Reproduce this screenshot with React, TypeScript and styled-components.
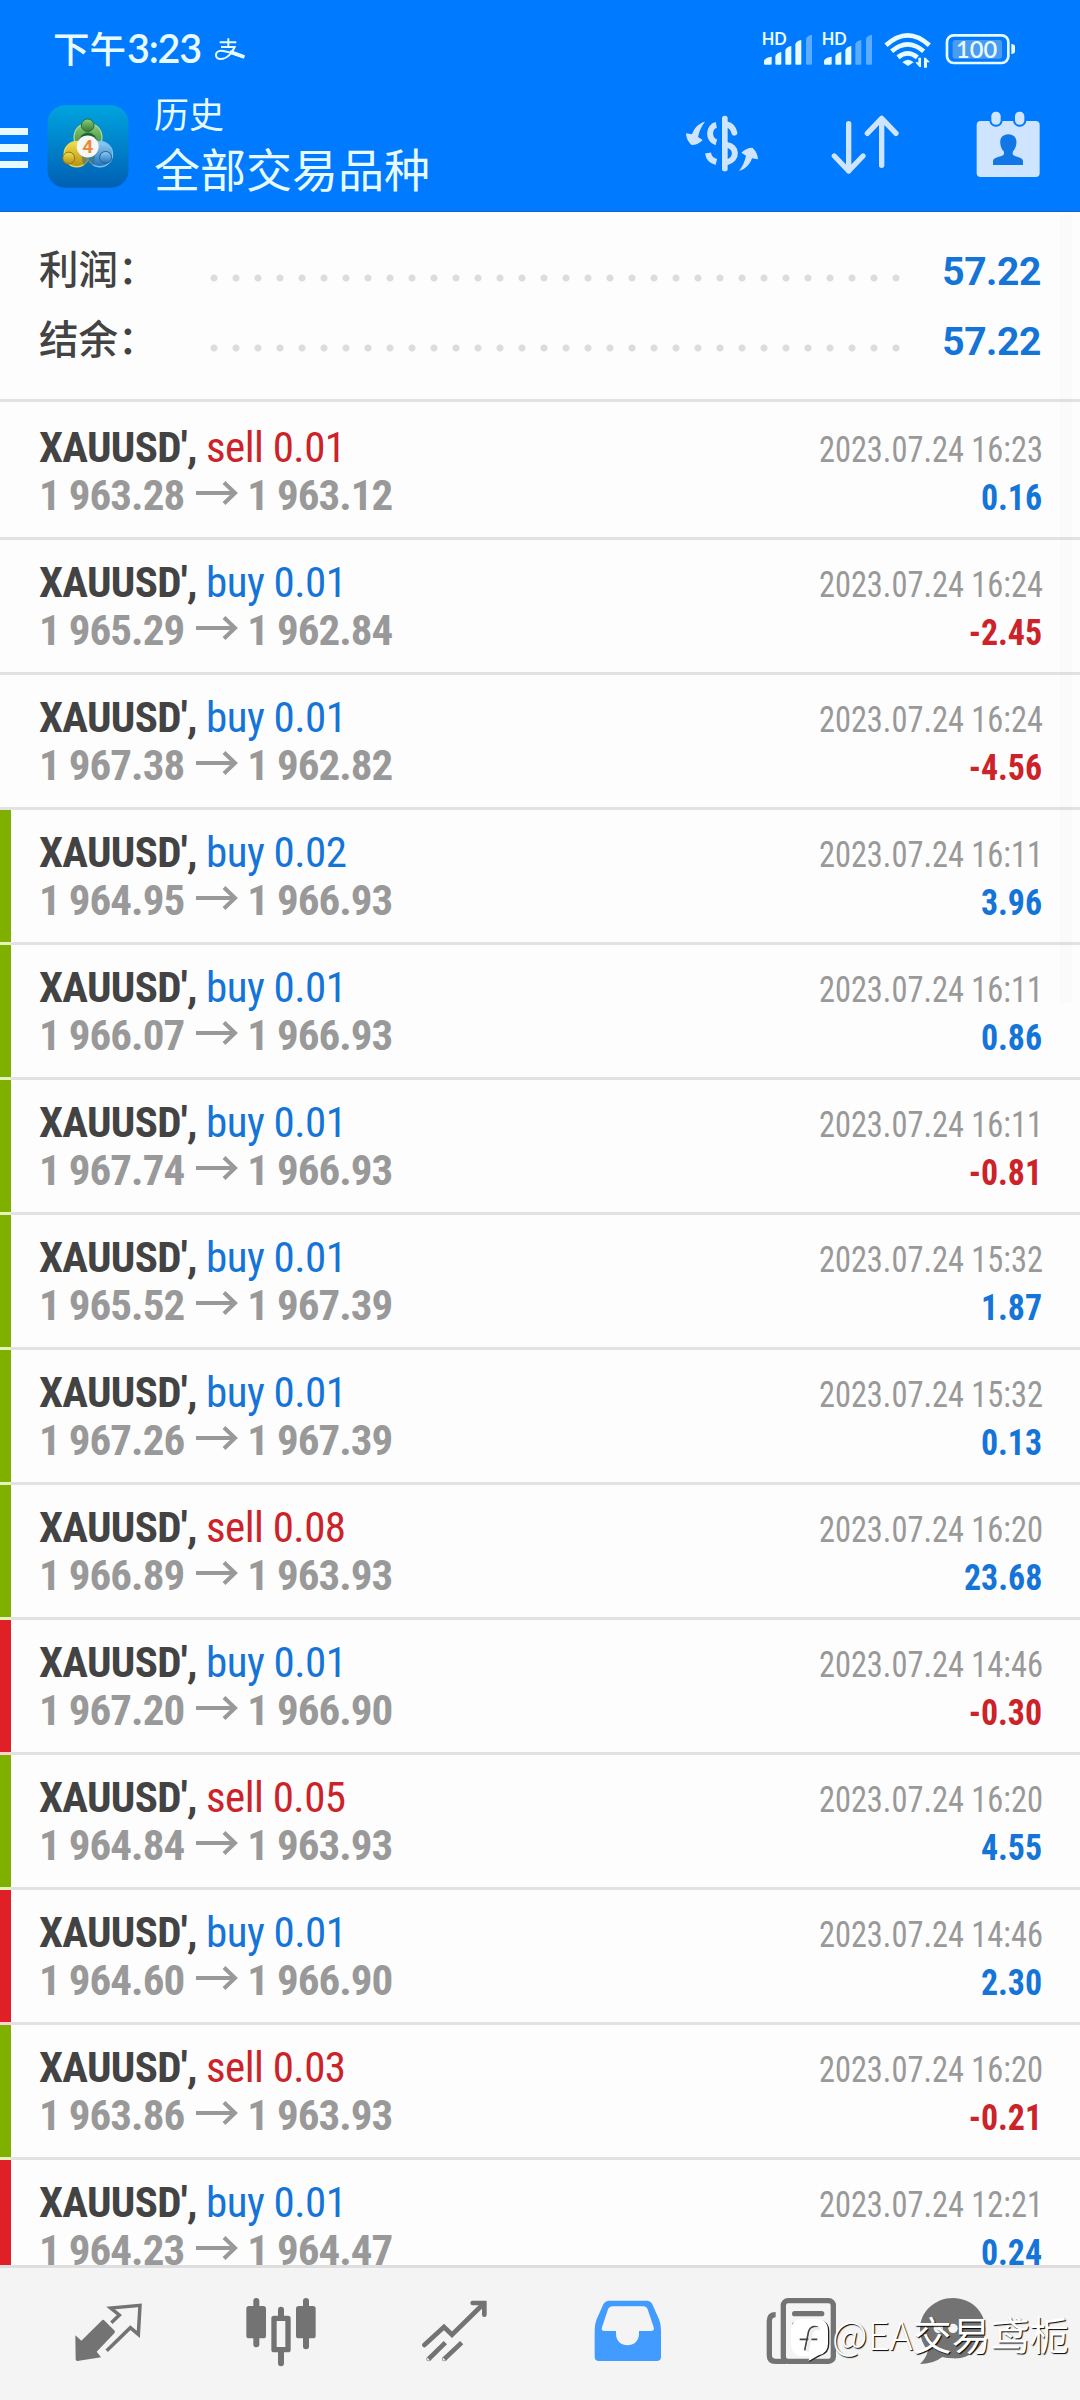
import React from "react";
import styled, { createGlobalStyle } from "styled-components";

const condensed = `"Roboto Condensed", Roboto, sans-serif`;
const cjk = `"Noto Sans CJK SC", sans-serif`;

const colors = {
  brand: "#007aff",
  onBrand: "#e6faff",
  action: "#cfe5ff",
  buy: "#1474d8",
  sell: "#cc2229",
  ink: "#434343",
  muted: "#999999",
  line: "#e2e2e2",
  surface: "#fdfdfd",
  nav: "#f4f4f4",
  navIcon: "#737373",
  navActive: "#429bfe",
};

const GlobalStyle = createGlobalStyle`
  * { box-sizing: border-box; }
  body { margin: 0; background: ${colors.surface}; }
`;

const Screen = styled.div`
  position: relative;
  display: flex;
  flex-direction: column;
  width: 1080px;
  height: 2400px;
  overflow: hidden;
  background: ${colors.surface};
`;

const Header = styled.header`
  display: flex;
  flex-direction: column;
  flex: none;
  height: 212px;
  background: ${colors.brand};
  border-bottom: 1px solid #1763b8;
  color: ${colors.onBrand};
`;

const StatusBar = styled.div`
  display: flex;
  align-items: center;
  height: 90px;
  padding: 8px 62px 0 53px;
`;

const Clock = styled.div`
  display: flex;
  align-items: center;
  font: 500 36.5px/48px ${cjk};
  margin-top: -3px;
`;

const Digits = styled.span`
  font-family: Lato, ${cjk};
  font-size: 39.5px;
  font-weight: 600;
  margin-left: 1px;
  letter-spacing: -1.2px;
`;

const PayIcon = styled.svg`
  width: 34px;
  height: 27px;
  margin: -2px 0 0 12px;
`;

const StatusIcons = styled.svg`
  width: 258px;
  height: 40px;
  margin-left: auto;
`;

const AppBar = styled.div`
  display: flex;
  align-items: center;
  height: 112px;
`;

const MenuButton = styled.div`
  display: flex;
  flex-direction: column;
  gap: 9px;
  width: 28px;
  margin-top: 4px;
`;

const MenuLine = styled.span`
  height: 7.5px;
  background: ${colors.onBrand};
`;

const Logo = styled.svg`
  width: 82px;
  height: 83px;
  margin-left: 19px;
`;

const Titles = styled.div`
  display: flex;
  flex-direction: column;
  margin-left: 25px;
  font-family: ${cjk};
  font-weight: 400;
`;

const Subtitle = styled.span`
  height: 50px;
  font-size: 35px;
  line-height: 43px;
`;

const Title = styled.span`
  height: 61px;
  font-size: 46px;
  line-height: 53px;
`;

const Actions = styled.div`
  display: flex;
  align-items: center;
  margin: -2px 0 0 auto;
  padding-right: 36px;
`;

const ActionIcon = styled.svg<{ $width: number; $gap?: number }>`
  width: ${(p) => p.$width}px;
  height: 72px;
  margin-right: ${(p) => p.$gap ?? 0}px;
`;

const Summary = styled.section`
  flex: none;
  height: 190px;
  padding: 24px 39px 0 39px;
  border-bottom: 3px solid ${colors.line};
`;

const SummaryRow = styled.div`
  display: flex;
  align-items: center;
  height: 70px;
`;

const SummaryLabel = styled.span`
  width: 171px;
  margin-top: -8px;
  font: 500 39.5px/60px ${cjk};
  color: ${colors.ink};
`;

const Dots = styled.span`
  width: 704px;
  height: 8px;
  margin-top: 14px;
  background: radial-gradient(circle at 4px 4px, #dcdcdc 3px, transparent 4px) 0 0 / 22px 8px repeat-x;
`;

const SummaryValue = styled.span`
  margin-left: auto;
  margin-top: 1px;
  font: 700 39px/60px Roboto, sans-serif;
  letter-spacing: -0.4px;
  color: ${colors.buy};
`;

const List = styled.main`
  flex: 1;
  min-height: 0;
  padding-top: 3px;
  overflow: hidden;
`;

type Mark = "none" | "green" | "red";
const marks: Record<Mark, [string, string]> = {
  none: ["transparent", colors.line],
  green: ["#7fb000", "#e4f3bd"],
  red: ["#e02027", "#fbd3d0"],
};

const Row = styled.article`
  display: flex;
  height: 135px;
`;

const Marker = styled.span<{ $mark: Mark }>`
  width: 11px;
  background: ${(p) => marks[p.$mark][0]};
  background-clip: padding-box;
  border-bottom: 3px solid ${(p) => marks[p.$mark][1]};
`;

const RowBody = styled.div`
  flex: 1;
  padding: 18px 37px 0 28px;
  border-bottom: 3px solid ${colors.line};
`;

const Line = styled.div`
  display: flex;
  align-items: baseline;
  justify-content: space-between;
  height: 48px;
  font: 400 43px/48px ${condensed};
  white-space: pre;
`;

const Symbol = styled.b`
  color: ${colors.ink};
  font-weight: 700;
  letter-spacing: -0.7px;
`;

const Side = styled.span<{ $side: string }>`
  color: ${(p) => (p.$side === "buy" ? colors.buy : colors.sell)};
  letter-spacing: -0.55px;
`;

const Prices = styled.span`
  color: ${colors.muted};
  font-weight: 700;
  letter-spacing: -0.95px;
`;

const ArrowIcon = styled.svg`
  width: 42px;
  height: 24px;
  margin: 0 9px 0 12px;
  vertical-align: 5px;
`;

const Time = styled.time`
  color: ${colors.muted};
  font-size: 36px;
  transform: scaleX(0.9);
  transform-origin: right;
`;

const Profit = styled.b<{ $loss: boolean }>`
  margin-right: 1px;
  font-size: 36px;
  font-weight: 700;
  color: ${(p) => (p.$loss ? colors.sell : colors.buy)};
  transform: scaleX(0.94);
  transform-origin: right;
`;

const ScrollTrack = styled.div`
  position: absolute;
  top: 215px;
  right: 8px;
  width: 12px;
  height: 788px;
  background: rgba(0, 0, 0, 0.012);
`;

const Nav = styled.nav`
  display: flex;
  flex: none;
  height: 135px;
  padding-left: 21.5px;
  background: ${colors.nav};
  border-top: 3px solid #dedede;
`;

const NavItem = styled.div<{ $width?: number; $active?: boolean }>`
  display: flex;
  align-items: center;
  justify-content: center;
  width: ${(p) => p.$width ?? 173}px;
  color: ${(p) => (p.$active ? colors.navActive : colors.navIcon)};
  svg {
    width: 72px;
    height: 72px;
  }
`;

const Watermark = styled.div`
  position: absolute;
  left: 790px;
  top: 2306px;
  display: flex;
  align-items: center;
  height: 54px;
  color: #fff;
  font: 400 39px/54px ${cjk};
  text-shadow: 1px 1px 1px #000;
  white-space: nowrap;
  svg {
    width: 40px;
    height: 46px;
    margin: 14px 2px 0 0;
  }
`;

const Thin = styled.span`
  font-weight: 300;
`;

type Deal = [string, string, string, string, string, string, Mark];
const deals: Deal[] = [
  ["sell", "0.01", "1 963.28", "1 963.12", "16:23", "0.16", "none"],
  ["buy", "0.01", "1 965.29", "1 962.84", "16:24", "-2.45", "none"],
  ["buy", "0.01", "1 967.38", "1 962.82", "16:24", "-4.56", "none"],
  ["buy", "0.02", "1 964.95", "1 966.93", "16:11", "3.96", "green"],
  ["buy", "0.01", "1 966.07", "1 966.93", "16:11", "0.86", "green"],
  ["buy", "0.01", "1 967.74", "1 966.93", "16:11", "-0.81", "green"],
  ["buy", "0.01", "1 965.52", "1 967.39", "15:32", "1.87", "green"],
  ["buy", "0.01", "1 967.26", "1 967.39", "15:32", "0.13", "green"],
  ["sell", "0.08", "1 966.89", "1 963.93", "16:20", "23.68", "green"],
  ["buy", "0.01", "1 967.20", "1 966.90", "14:46", "-0.30", "red"],
  ["sell", "0.05", "1 964.84", "1 963.93", "16:20", "4.55", "green"],
  ["buy", "0.01", "1 964.60", "1 966.90", "14:46", "2.30", "red"],
  ["sell", "0.03", "1 963.86", "1 963.93", "16:20", "-0.21", "green"],
  ["buy", "0.01", "1 964.23", "1 964.47", "12:21", "0.24", "red"],
];

function DealRow({ deal }: { deal: Deal }) {
  const [side, lots, open, close, time, profit, mark] = deal;
  return (
    <Row>
      <Marker $mark={mark} />
      <RowBody>
        <Line>
          <span>
            <Symbol>XAUUSD', </Symbol>
            <Side $side={side}>{`${side} ${lots}`}</Side>
          </span>
          <Time>{`2023.07.24 ${time}`}</Time>
        </Line>
        <Line>
          <Prices>
            {open}
            <ArrowIcon viewBox="0 0 42 24" fill="none" stroke="currentColor" strokeWidth="4">
              <path d="M0 12H39M28 1.500L39 12L28 22.500" />
            </ArrowIcon>
            {close}
          </Prices>
          <Profit $loss={profit.startsWith("-")}>{profit}</Profit>
        </Line>
      </RowBody>
    </Row>
  );
}

function Signal({ x, level }: { x: number; level: number }) {
  const tops = [110, 96, 78, 60, 44];
  return (
    <g fill={colors.onBrand}>
      <text x={x - 7} y="75" fontFamily="Lato, sans-serif" fontWeight="700" fontSize="49">HD</text>
      {tops.map((top, i) => {
        const left = x + [0, 34, 64, 94, 126][i];
        const w = i === 0 ? 23 : 18;
        return (
          <path
            key={top}
            opacity={i < level ? 1 : 0.4}
            d={`M${left} 131V${top + 12}Q${left + 5} ${top + 2} ${left + w} ${top}V131Q${left + w} 134 ${left + w - 3} 134H${left + 3}Q${left} 134 ${left} 131Z`}
          />
        );
      })}
    </g>
  );
}

export default function App() {
  return (
    <Screen>
      <GlobalStyle />
      <Header>
        <StatusBar>
          <Clock>
            下午<Digits>3:23</Digits>
          </Clock>
          <PayIcon viewBox="549 44 102 81" fill="none" stroke={colors.onBrand} strokeWidth="6">
            <path d="M569 66H619M595 54V79M573 80H614C607 97 592 116 572 116C552 116 554 91 573 91C594 91 612 104 643 110" />
            <path d="M600 94L643 110" strokeWidth="11" />
          </PayIcon>
          <StatusIcons viewBox="270 27 774 120">
            <Signal x={282} level={4} />
            <Signal x={462} level={3} />
            <g fill="none" stroke={colors.onBrand} strokeWidth="14">
              <path d="M648 76Q713 16 778 76" />
              <path d="M665 94Q713 52 761 94" />
              <path d="M684 112Q713 88 742 112" />
            </g>
            <path d="M697 127Q714 112 731 127L714 138Z" fill={colors.onBrand} />
            <path d="M753 113V141H748L736 127H745V113ZM762 143V113H767L780 127H771V143Z" fill={colors.onBrand} />
            <rect x="831" y="46" width="184" height="83" rx="20" fill="none" stroke={colors.onBrand} strokeWidth="8" />
            <rect x="848" y="60" width="148" height="56" rx="7" fill="#4b9cf0" />
            <path d="M1024 72Q1035 72 1035 80V94Q1035 102 1024 102Z" fill={colors.onBrand} />
            <text x="920" y="114" textAnchor="middle" fontFamily="Lato, sans-serif" fontWeight="600" fontSize="71" fill={colors.onBrand}>100</text>
          </StatusIcons>
        </StatusBar>
        <AppBar>
          <MenuButton>
            <MenuLine />
            <MenuLine />
            <MenuLine />
          </MenuButton>
          <Logo viewBox="52 252 246 250">
            <defs>
              <linearGradient id="tile" x1="0" y1="0" x2="0" y2="1">
                <stop offset="0" stopColor="#00a4df" />
                <stop offset="1" stopColor="#005fb4" />
              </linearGradient>
              <linearGradient id="green" x1="0" y1="0" x2="0" y2="1">
                <stop offset="0" stopColor="#8fcf7b" />
                <stop offset="1" stopColor="#2f7a35" />
              </linearGradient>
              <linearGradient id="gold" x1="0" y1="0" x2="0" y2="1">
                <stop offset="0" stopColor="#f0e04a" />
                <stop offset="1" stopColor="#b98f14" />
              </linearGradient>
              <linearGradient id="sky" x1="0" y1="0" x2="0" y2="1">
                <stop offset="0" stopColor="#8fcdf5" />
                <stop offset="1" stopColor="#2272b8" />
              </linearGradient>
            </defs>
            <rect x="53" y="253" width="244" height="248" rx="52" fill="url(#tile)" />
            <circle cx="175" cy="349" r="42" fill="url(#green)" stroke="#a5d98c" strokeWidth="4" />
            <circle cx="175" cy="362" r="27" fill="#1f6433" />
            <circle cx="141" cy="400" r="38" fill="url(#gold)" stroke="#e6d95e" strokeWidth="4" />
            <circle cx="211" cy="400" r="38" fill="url(#sky)" stroke="#7fc0ec" strokeWidth="4" />
            <path d="M150 366L160 432L194 432L200 366Z" fill="#2b6f78" opacity=".55" />
            <circle cx="174" cy="313" r="19" fill="url(#green)" stroke="#2f6a35" strokeWidth="3" />
            <circle cx="117" cy="412" r="18" fill="url(#gold)" stroke="#947414" strokeWidth="3" />
            <circle cx="228" cy="410" r="18" fill="url(#sky)" stroke="#1f5f9a" strokeWidth="3" />
            <circle cx="174" cy="377" r="33" fill="#f6f7f4" />
            <text x="174" y="398" textAnchor="middle" fontFamily="Roboto, sans-serif" fontWeight="700" fontSize="58" fill="#e88b3c">4</text>
          </Logo>
          <Titles>
            <Subtitle>历史</Subtitle>
            <Title>全部交易品种</Title>
          </Titles>
          <Actions>
            <ActionIcon $width={84} $gap={65} viewBox="30 270 252 216" fill={colors.action}>
              <rect x="156" y="290" width="17" height="167" rx="8" />
              <g fill="none" stroke={colors.action} strokeWidth="18">
                <path d="M139 318C116 322 112 362 139 370" />
                <path d="M114 402C116 416 124 425 139 429" />
                <path d="M172 317C184 320 190 328 193 341" strokeLinecap="round" />
                <path d="M170 378C202 382 204 422 170 430" />
              </g>
              <path d="M105 308C84 314 72 328 66 346L48 343C49 360 56 370 65 378C78 378 90 372 98 363L84 354C88 336 94 322 105 308Z" />
              <path d="M207 456C228 450 240 436 246 418L264 421C263 404 256 394 247 386C234 386 222 392 214 401L228 410C224 428 218 442 207 456Z" />
            </ActionIcon>
            <ActionIcon $width={72} $gap={71} viewBox="477 270 216 216" fill="none" stroke={colors.action} strokeWidth="16" strokeLinecap="round" strokeLinejoin="round">
              <path d="M536 314V456M493 411L536 456L579 411" />
              <path d="M635 439V298M592 343L635 298L678 343" />
            </ActionIcon>
            <ActionIcon $width={72} viewBox="906 270 216 216" fill={colors.action}>
              <rect x="920" y="306" width="189" height="168" rx="12" />
              <rect x="958" y="274" width="40" height="49" rx="19" fill={colors.brand} />
              <rect x="1029" y="274" width="40" height="49" rx="19" fill={colors.brand} />
              <rect x="964" y="278" width="28" height="39" rx="13" />
              <rect x="1035" y="278" width="28" height="39" rx="13" />
              <path d="M1015 346C1034 346 1041 360 1039 374C1038 386 1032 394 1028 398V406C1034 416 1058 412 1059 426V438H969V426C970 412 996 416 1002 406V398C998 394 992 386 991 374C989 360 996 346 1015 346Z" fill="#1176e6" />
            </ActionIcon>
          </Actions>
        </AppBar>
      </Header>

      <Summary>
        <SummaryRow>
          <SummaryLabel>利润：</SummaryLabel>
          <Dots />
          <SummaryValue>57.22</SummaryValue>
        </SummaryRow>
        <SummaryRow>
          <SummaryLabel>结余：</SummaryLabel>
          <Dots />
          <SummaryValue>57.22</SummaryValue>
        </SummaryRow>
      </Summary>

      <List>
        {deals.map((deal, i) => (
          <DealRow key={i} deal={deal} />
        ))}
      </List>
      <ScrollTrack />

      <Nav>
        <NavItem>
          <svg viewBox="36 54 216 216" fill="currentColor">
            <path d="M127 120Q130 118 134 122L164 152Q166 156 163 160L110 215L123 232L52 243Q47 243 47 238L46 166L64 182Z" />
            <path d="M154 128L178 105L152 84L240 76L235 163L211 143L140 212" fill="none" stroke="currentColor" strokeWidth="10.500" />
          </svg>
        </NavItem>
        <NavItem>
          <svg viewBox="555 54 216 216" fill="currentColor">
            <rect x="559" y="78" width="59" height="97" rx="8" />
            <rect x="580" y="54" width="18" height="148" rx="9" />
            <rect x="708" y="78" width="59" height="97" rx="8" />
            <rect x="729" y="54" width="18" height="154" rx="9" />
            <rect x="642" y="115" width="42" height="94" fill="none" stroke="currentColor" strokeWidth="16" strokeLinejoin="round" />
            <path d="M654 110V89Q654 80 663 80Q672 80 672 89V110ZM654 214V250Q654 259 663 259Q672 259 672 250V214Z" />
          </svg>
        </NavItem>
        <NavItem>
          <svg viewBox="1074 54 216 216" fill="none" stroke="currentColor" strokeWidth="14">
            <path d="M1093 195L1152 141L1176 164L1270 72" strokeLinecap="round" />
            <path d="M1238 69H1273V104" strokeLinecap="round" />
            <path d="M1106 237L1156 188M1153 237L1205 188" />
            <circle cx="1106" cy="237" r="1" strokeWidth="12" />
            <circle cx="1153" cy="237" r="1" strokeWidth="12" />
          </svg>
        </NavItem>
        <NavItem $active>
          <svg viewBox="33 54 216 216" fill="currentColor">
            <path fillRule="evenodd" d="M88 62H200Q212 62 217 73L237 118Q243 132 243 150V230Q243 243 230 243H57Q44 243 44 230V150Q44 132 50 118L70 73Q76 62 88 62ZM98 79Q88 79 84 88L66 142Q62 153 74 153H108V161C108 207 177 207 177 161V153H212Q225 153 221 142L203 88Q199 79 190 79Z" />
          </svg>
        </NavItem>
        <NavItem>
          <svg viewBox="552 54 216 216" fill="none" stroke="currentColor" strokeWidth="16">
            <rect x="610" y="62" width="150" height="182" rx="14" />
            <path d="M587 104Q568 104 568 124V226Q568 244 586 244H620" />
            <path d="M644 101H725" strokeLinecap="round" />
            <path d="M644 134H725" strokeLinecap="round" />
          </svg>
        </NavItem>
        <NavItem $width={132}>
          <svg viewBox="1011 54 216 216" fill="currentColor">
            <path d="M1119 54C1174 54 1216 96 1216 146C1216 200 1170 238 1119 235Q1100 235 1087 231Q1060 252 1020 252Q1036 238 1044 213Q1020 184 1020 148C1020 94 1066 54 1119 54Z" />
            <g fill="#f4f4f4">
              <circle cx="1075" cy="145" r="14" />
              <circle cx="1119" cy="145" r="14" />
            </g>
          </svg>
        </NavItem>
      </Nav>

      <Watermark>
        <svg viewBox="628 116 120 138">
          <path d="M690 124H710Q746 124 746 160V198Q746 226 719 233L686 251L684 244L712 230Q740 220 740 190Z" fill="#222" />
          <path d="M666 122H708Q742 122 742 158V196Q742 224 714 231L684 248L686 234H666Q631 230 631 196V158Q631 122 666 122Z" fill="#fff" />
          <path d="M712 147Q686 138 682 168L672 216M657 183H710" fill="none" stroke="#444" strokeWidth="5" />
          <path d="M718 152Q694 144 690 172L680 220" fill="none" stroke="#eeeeee" strokeWidth="9" />
        </svg>
        <Thin>@EA</Thin>交易鸢栀
      </Watermark>
    </Screen>
  );
}
